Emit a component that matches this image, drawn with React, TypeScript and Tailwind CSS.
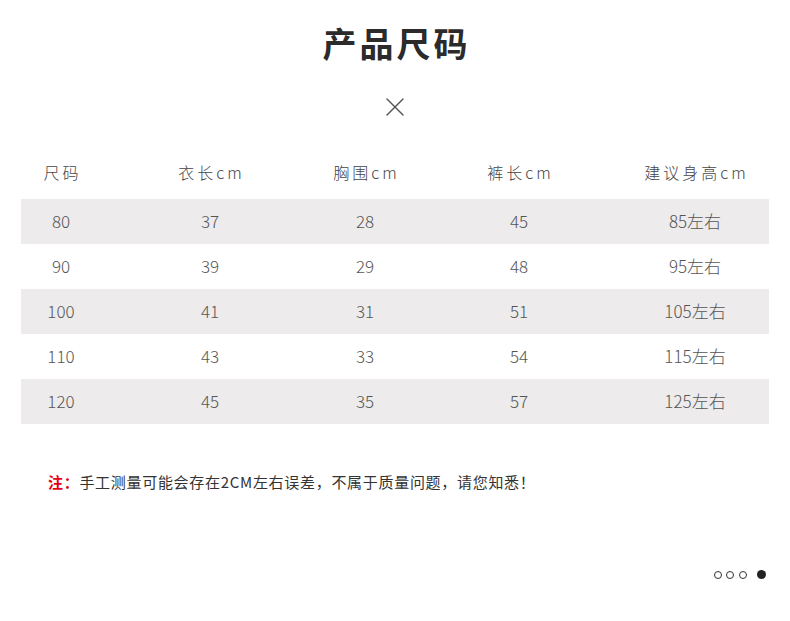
import { X } from 'lucide-react';

const headers = ['尺码', '衣长cm', '胸围cm', '裤长cm', '建议身高cm'];

const rows = [
  ['80', '37', '28', '45', '85左右'],
  ['90', '39', '29', '48', '95左右'],
  ['100', '41', '31', '51', '105左右'],
  ['110', '43', '33', '54', '115左右'],
  ['120', '45', '35', '57', '125左右'],
];

const font = { fontFamily: '"Noto Sans CJK SC", "Noto Sans", sans-serif' };

export default function App() {
  return (
    <div className="w-[790px] h-[621px] bg-white text-[#333]" style={font}>
      <div className="pt-[17px] flex flex-col items-center">
        <h1 className="text-[34px] leading-[52px] font-bold tracking-[3px] text-[#2b2b2b] pl-[3px]">产品尺码</h1>
        <X size={32} strokeWidth={1} className="mt-[22px] text-[#555]" />
      </div>

      <div className="ml-[21px] mt-[22px] w-[748px]">
        <div className="grid grid-cols-[80px_218px_92px_216px_136px] h-[54px] items-center text-[16px] font-light text-[#444] tracking-[3px]">
          {headers.map((h) => (
            <div key={h} className="text-center pl-[3px]">{h}</div>
          ))}
        </div>
        {rows.map((r, i) => (
          <div
            key={r[0]}
            className={`grid grid-cols-[80px_218px_92px_216px_136px] h-[45px] items-center text-[17px] leading-[24px] font-light text-[#555] ${i % 2 === 0 ? 'bg-[#edebec]' : 'bg-white'}`}
          >
            {r.map((c, j) => (
              <div key={j} className="text-center -mt-[2px]">{c}</div>
            ))}
          </div>
        ))}
      </div>

      <p className="mt-[47px] ml-[48px] text-[15px] leading-[22px] tracking-[0.7px] text-[#333]">
        <span className="text-[#e60012] font-bold">注：</span>
        手工测量可能会存在2CM左右误差，不属于质量问题，请您知悉！
      </p>

      <div className="mt-[77px] flex items-center justify-end pr-[24px]">
        <span className="w-[8px] h-[8px] rounded-full border border-[#333]" />
        <span className="ml-[4.5px] w-[8px] h-[8px] rounded-full border border-[#333]" />
        <span className="ml-[4.5px] w-[8px] h-[8px] rounded-full border border-[#333]" />
        <span className="ml-[10.5px] w-[9px] h-[9px] rounded-full bg-[#222]" />
      </div>
    </div>
  );
}
